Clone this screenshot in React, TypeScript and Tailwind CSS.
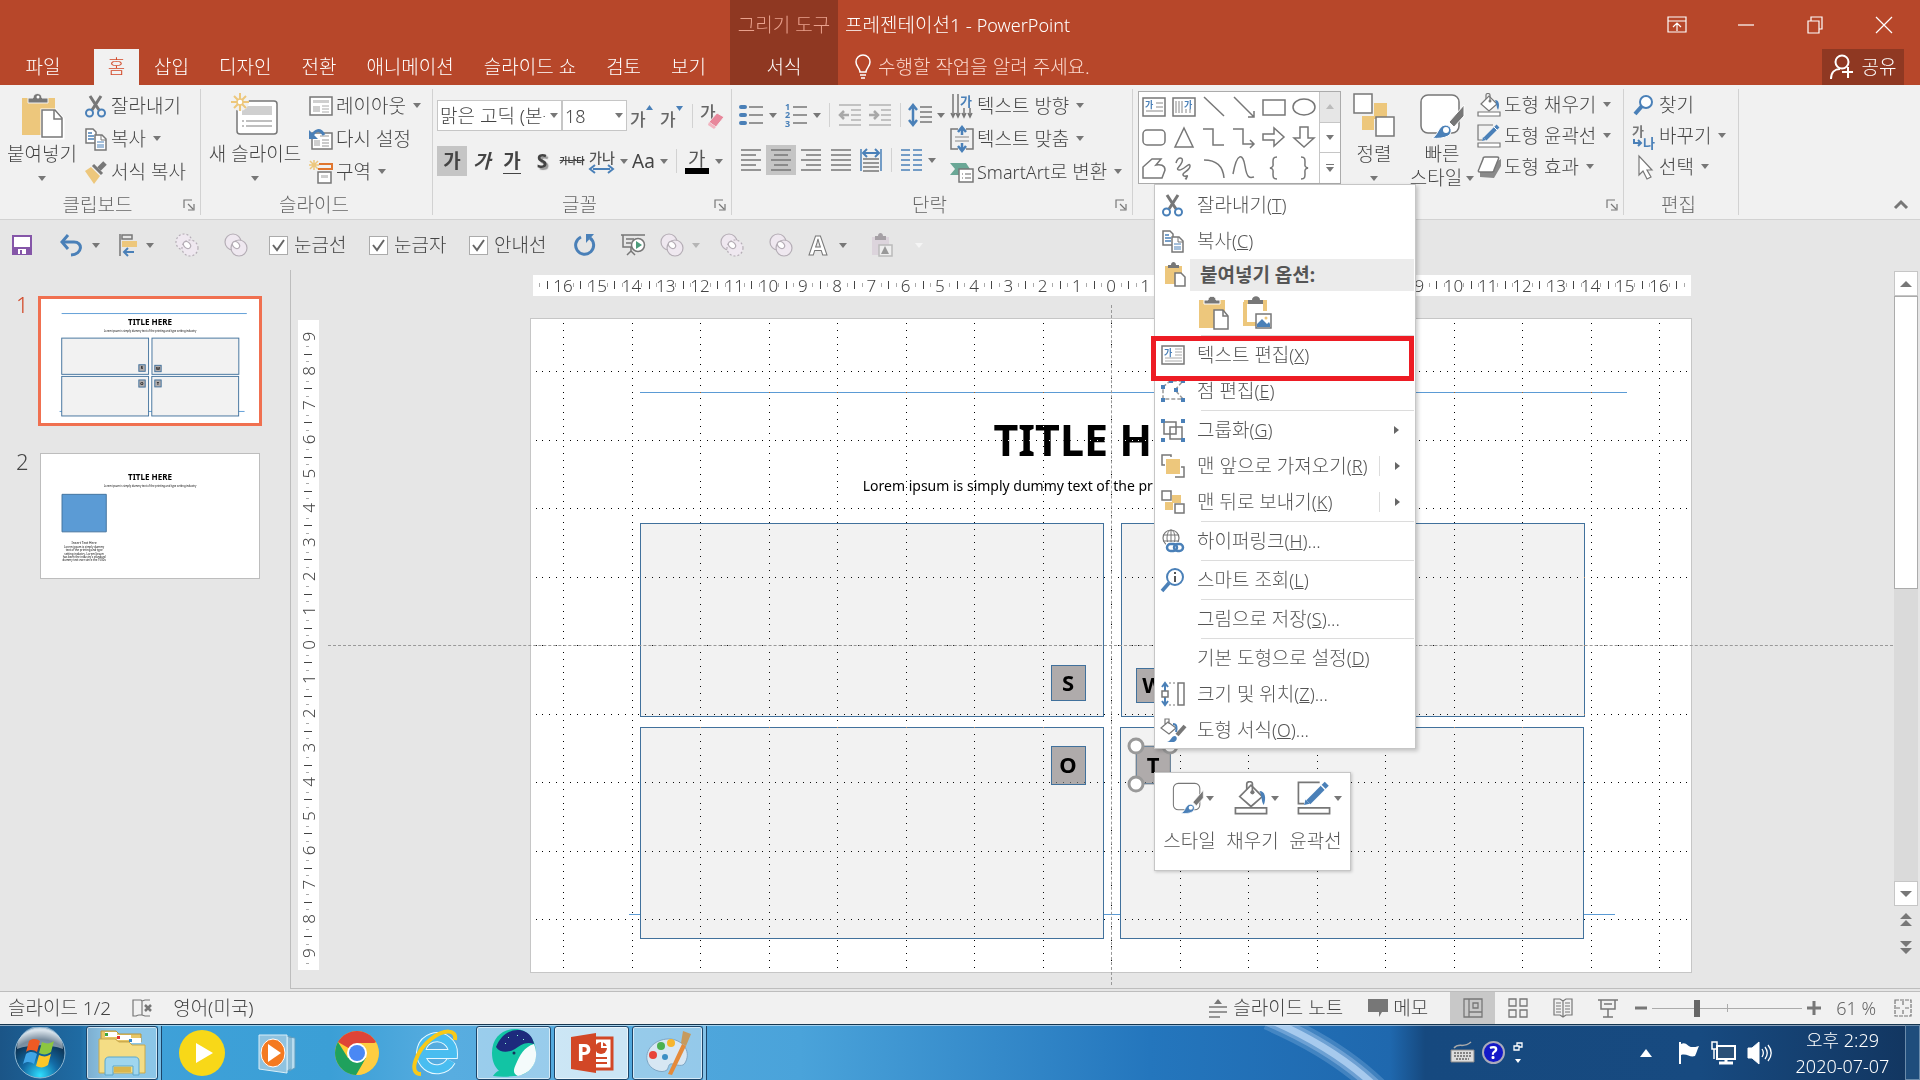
import React from 'react';

const BLUE = '#4a80b8';
const GRAY = '#777777';
const TAN = '#edc77c';

type IconProps = { w?: number; h?: number; children?: React.ReactNode };

const Icon = ({ w = 24, h = 24, children }: IconProps) => (
  <svg width={w} height={h} viewBox={`0 0 ${w} ${h}`} fill="none" stroke={GRAY} strokeWidth="1.5" className="shrink-0 overflow-visible" aria-hidden="true">
    {children}
  </svg>
);

const Caret = ({ className = 'text-[#777]' }: { className?: string }) => (
  <svg width="8" height="5" viewBox="0 0 8 5" fill="currentColor" className={`shrink-0 ${className}`} aria-hidden="true">
    <path d="M0 0h8L4 5z" />
  </svg>
);

/* Clipboard icons */

const PasteIcon = () => (
  <Icon w={44} h={46}>
    <path d="M2 5h33v37H2z" fill={TAN} stroke="none" />
    <path d="M8 10V5h5c0-6 9-6 9 0h6v5z" fill={GRAY} stroke="#f1f1f1" strokeWidth="1" />
    <circle cx="18" cy="4" r="1.5" fill="#fff" stroke="none" />
    <path d="M22 17h13l8 9v19H22z" fill="#fff" stroke="#fff" strokeWidth="3" />
    <path d="M22 17h13l7 8v19H22z" fill="#fff" />
    <path d="M34 17v9h8" />
  </Icon>
);

const PasteSmallIcon = () => (
  <Icon w={24} h={26}>
    <path d="M2 4h17v18H2z" fill={TAN} stroke="none" />
    <path d="M5 6V3h3c0-4 5-4 5 0h3v3z" fill={GRAY} stroke="none" />
    <path d="M12 11h6l4 4v9H12z" fill="#fff" />
  </Icon>
);

const PasteKeepIcon = () => (
  <Icon w={30} h={34}>
    <path d="M1 4h26v28H1z" fill={TAN} stroke="none" />
    <path d="M6 8V4h4c0-5 8-5 8 0h4v4z" fill={GRAY} stroke="#fff" strokeWidth="1" />
    <path d="M16 14h9l5 6v13H16z" fill="#fff" />
    <path d="M25 14v6h5" />
  </Icon>
);

const PastePictureIcon = () => (
  <Icon w={30} h={34}>
    <path d="M3 6v22h12M23 6v9" stroke={TAN} strokeWidth="4" />
    <path d="M2 4h6v4H2zM18 4h7v4h-7z" fill={TAN} stroke="none" />
    <path d="M6 8V4h4c0-5 8-5 8 0h3v4z" fill={GRAY} stroke="none" />
    <path d="M14 18h15v14H14z" fill="#fff" />
    <path d="M15 31v-3l5-5 5 5 2-2 1 2v3z" fill={BLUE} stroke="none" />
    <circle cx="24" cy="22" r="1.5" fill={TAN} stroke="none" />
  </Icon>
);

const CutIcon = () => (
  <Icon>
    <path d="M6 2l9 14M17 2L8 16" stroke={GRAY} strokeWidth="3" />
    <circle cx="5.500" cy="19" r="3.500" stroke={BLUE} strokeWidth="2" />
    <circle cx="17.500" cy="19" r="3.500" stroke={BLUE} strokeWidth="2" />
  </Icon>
);

const CopyIcon = () => (
  <Icon>
    <path d="M2 2h7l3 3v11H2z" fill="#fff" />
    <path d="M4 6h4M4 9h6M4 12h6" stroke={BLUE} />
    <path d="M11 8h7l4 4v11H11z" fill="#fff" />
    <path d="M17 8v5h5" strokeWidth="1" />
    <path d="M13 15h7M13 18h7M13 20h7" stroke={BLUE} strokeWidth="1" />
  </Icon>
);

const FormatPainterIcon = () => (
  <Icon>
    <path d="M1 11l6-4 9 9-6 8z" fill={TAN} stroke="none" />
    <path d="M9 5l9 9" strokeWidth="3" />
    <path d="M15 9l6-6" strokeWidth="5" />
  </Icon>
);

/* Slide icons */

const Spark = () => (
  <path d="M9 0v6M9 12v6M0 9h6M12 9h6M3 3l4 4M11 11l4 4M15 3l-4 4M7 11l-4 4" stroke={TAN} strokeWidth="2" />
);

const NewSlideIcon = () => (
  <Icon w={48} h={46}>
    <rect x="6" y="8" width="40" height="33" rx="3" fill="#fff" />
    <path d="M11 13h30v9H11z" fill="#cfcfcf" stroke="none" />
    <path d="M11 28h2M15 28h26M11 33h2M15 33h26" stroke="#aaa" />
    <circle cx="9" cy="9" r="9" fill="#f1f1f1" stroke="none" />
    <Spark />
    <circle cx="9" cy="9" r="3" fill="#fff" stroke={TAN} />
  </Icon>
);

const LayoutIcon = () => (
  <Icon>
    <path d="M1 3h22v18H1z" fill="#fff" />
    <path d="M4 6h16v3H4zM4 12h7v6H4z" fill="#cfcfcf" stroke="none" />
    <path d="M13 12h7M13 15h7M13 18h7" stroke="#aaa" strokeWidth="1" />
  </Icon>
);

const ResetIcon = () => (
  <Icon>
    <path d="M3 6h20v16H3z" fill="#fff" />
    <path d="M11 9h9M13 13h7M13 16h7M13 19h7" stroke="#bbb" />
    <path d="M5 13h6v6H5z" fill="#cfcfcf" stroke="none" />
    <path d="M3 9c3-6 8-8 12-1" stroke={BLUE} strokeWidth="3" />
    <path d="M0 3v9h9z" fill={BLUE} stroke="none" />
  </Icon>
);

const SectionIcon = () => (
  <Icon>
    <path d="M5 0v10M0 5h10M1 1l8 8M9 1L1 9" stroke={TAN} />
    <path d="M10 4h13v5H9" stroke="#e0762f" strokeWidth="2" />
    <path d="M9 12h13v11H9z" fill="#fff" />
    <path d="M12 15h7v3h-7z" fill="#cfcfcf" stroke="none" />
  </Icon>
);

/* Text glyph icons */

const GrowFontIcon = ({ up }: { up: boolean }) => (
  <Icon w={26} h={28}>
    <text x="1" y="24" fontSize="17" fontWeight="500" fill="#666" stroke="none">가</text>
    <path d={up ? 'M17 8h7l-3.500-5z' : 'M17 4h7l-3.500 5z'} fill={BLUE} stroke="none" />
  </Icon>
);

const ClearFormatIcon = () => (
  <Icon w={26} h={28}>
    <text x="0" y="17" fontSize="17" fontWeight="500" fill="#666" stroke="none">가</text>
    <path d="M9 20l8-9 7 4-8 10z" fill="#e8879b" stroke="#f1f1f1" strokeWidth="1" />
    <path d="M9 20l7 5-2 2-6-4z" fill="#f3b4c0" stroke="none" />
  </Icon>
);

const SpacingIcon = () => (
  <Icon w={26} h={26}>
    <text x="0" y="15" fontSize="14" fontWeight="500" fill="#555" stroke="none">가나</text>
    <path d="M4 21h17" stroke={BLUE} strokeWidth="2" />
    <path d="M6 17l-5 4 5 4M19 17l5 4-5 4" stroke={BLUE} strokeWidth="2" />
  </Icon>
);

const FontColorIcon = () => (
  <Icon w={26} h={30}>
    <text x="4" y="20" fontSize="19" fontWeight="400" fill="#555" stroke="none">가</text>
    <path d="M1 22h24v6H1z" fill="#000" stroke="none" />
  </Icon>
);

/* Paragraph icons */

const BulletsIcon = () => (
  <Icon>
    <path d="M9 4h14M9 12h14M9 20h14" />
    <path d="M1 4h4M1 12h4M1 20h4" stroke={BLUE} strokeWidth="4" strokeLinecap="round" />
  </Icon>
);

const NumberingIcon = () => (
  <Icon>
    <path d="M9 4h14M9 12h14M9 20h14" />
    <g fill={BLUE} stroke="none" fontSize="9" fontWeight="700">
      <text x="1" y="7">1</text>
      <text x="1" y="15">2</text>
      <text x="1" y="24">3</text>
    </g>
  </Icon>
);

const IndentIcon = ({ flip = false }: { flip?: boolean }) => (
  <Icon>
    <path d="M1 2h22M13 7h10M13 12h10M13 17h10M1 22h22" stroke="#b3b3b3" />
    <path d={flip ? 'M1 12h8M6 8l4 4-4 4' : 'M3 12h8M6 8l-4 4 4 4'} stroke="#a8a8a8" strokeWidth="2.500" />
  </Icon>
);

const LineSpacingIcon = () => (
  <Icon w={24} h={26}>
    <path d="M12 5h12M12 10h12M12 15h12M12 20h12" />
    <path d="M5 4v18M1 8l4-5 4 5M1 18l4 5 4-5" stroke={BLUE} strokeWidth="2.500" />
  </Icon>
);

const alignPaths = {
  left: 'M2 2h20M2 7h15M2 12h20M2 17h15M2 22h20',
  center: 'M2 2h20M5 7h14M2 12h20M5 17h14M2 22h20',
  right: 'M2 2h20M7 7h15M2 12h20M7 17h15M2 22h20',
  justify: 'M2 2h20M2 7h20M2 12h20M2 17h20M2 22h20',
};

const AlignIcon = ({ kind }: { kind: keyof typeof alignPaths }) => (
  <Icon>
    <path d={alignPaths[kind]} />
  </Icon>
);

const DistributeIcon = () => (
  <Icon>
    <path d="M2 1v22M22 1v22" stroke={BLUE} />
    <path d="M5 5h14M8 1L4 5l4 4M16 1l4 4-4 4" stroke={BLUE} strokeWidth="2" />
    <path d="M4 11h16M4 15h16M4 19h16M4 23h16" />
  </Icon>
);

const ColumnsIcon = () => (
  <Icon>
    <path d="M2 2h9M2 7h9M2 12h9M2 17h9M2 22h9M14 2h9M14 7h9M14 12h9M14 17h9M14 22h9" stroke={BLUE} />
  </Icon>
);

const TextDirectionIcon = () => (
  <Icon>
    <path d="M3 0v22M8 0v22M14 14v8M20 14v8M1 19l2 4 2-4M6 19l2 4 2-4M12 19l2 4 2-4M18 19l2 4 2-4" />
    <text x="10" y="12" fontSize="13" fontWeight="700" fill={BLUE} stroke="none">가</text>
  </Icon>
);

const TextAlignIcon = () => (
  <Icon w={24} h={26}>
    <path d="M8 3H1v20h7M16 3h7v20h-7" />
    <path d="M5 11h14M5 15h14" stroke="#aaa" />
    <path d="M12 2v7M8 6l4-5 4 5M12 17v7M8 20l4 5 4-5" stroke={BLUE} strokeWidth="2.500" />
  </Icon>
);

const SmartArtIcon = () => (
  <Icon>
    <path d="M0 3h16l4 6-4 6H0l5-6z" fill="#6aa796" stroke="none" />
    <path d="M9 9h14v13H9z" fill="#fff" />
    <path d="M12 14h1M15 14h6M12 18h1M15 18h6" stroke="#999" />
  </Icon>
);

/* Drawing icons */

const ArrangeIcon = () => (
  <Icon w={44} h={46}>
    <path d="M22 10h13v16H22zM10 23h12v14H10z" fill={TAN} stroke="none" />
    <path d="M2 1h18v19H2z" fill="#fff" />
    <path d="M24 24h18v19H24z" fill="#fff" />
  </Icon>
);

const QuickStyleIcon = ({ size = 46 }: { size?: number }) => (
  <svg width={size} height={size} viewBox="0 0 46 46" fill="none" stroke={GRAY} strokeWidth="1.5" aria-hidden="true">
    <rect x="2" y="2" width="38" height="38" rx="7" fill="#fff" />
    <path d="M45 12v11L35 34l-5-5z" fill={GRAY} stroke="#fff" strokeWidth="1" />
    <path d="M13 45c6-2 6-12 13-13 7 0 8 8 3 11-4 2-10 3-16 2z" fill={BLUE} stroke="#fff" strokeWidth="1" />
    <circle cx="27" cy="37" r="3" fill="#fff" stroke="none" />
  </svg>
);

const FillIcon = ({ w = 24, h = 24 }: { w?: number; h?: number }) => (
  <svg width={w} height={h} viewBox="0 0 24 24" fill="none" stroke={GRAY} strokeWidth="1.2" aria-hidden="true">
    <path d="M4 11l8-8 8 8-8 7z" fill="#fff" />
    <path d="M9 6V2c0-2 4-2 4 0v6" />
    <circle cx="13" cy="8" r="1.500" fill={GRAY} stroke="none" />
    <path d="M18 7c4 0 5 5 3 10-2-3-1-6-3-10z" fill={BLUE} stroke="none" />
    <path d="M1 19h22v4H1z" fill="#fff" />
  </svg>
);

const OutlineIcon = ({ w = 24, h = 24 }: { w?: number; h?: number }) => (
  <svg width={w} height={h} viewBox="0 0 24 24" fill="none" stroke={GRAY} strokeWidth="1.2" aria-hidden="true">
    <path d="M16 1H1v15h4" />
    <path d="M8 15L21 2" stroke={BLUE} strokeWidth="4" />
    <path d="M5 17l1-4 3 3z" fill={BLUE} stroke="none" />
    <path d="M17 3l4 4" stroke="#fff" strokeWidth="1" />
    <path d="M1 19h22v4H1z" fill="#fff" />
  </svg>
);

const EffectIcon = () => (
  <Icon>
    <path d="M3 16v6l14 1 7-12V4z" fill="#8a8a8a" stroke="none" />
    <path d="M8 2h12c2 0 2 1 1 3l-4 10c0 1-1 2-2 2H3c-2 0-2-1-1-3L6 4c0-1 1-2 2-2z" fill="#fff" />
  </Icon>
);

const FindIcon = () => (
  <Icon>
    <circle cx="14" cy="9" r="6" fill="#fff" stroke={BLUE} strokeWidth="2" />
    <path d="M10 13l-7 8" stroke={BLUE} strokeWidth="4" />
  </Icon>
);

const ReplaceIcon = () => (
  <Icon>
    <text x="0" y="12" fontSize="13" fontWeight="700" fill="#777" stroke="none">가</text>
    <text x="11" y="24" fontSize="13" fontWeight="700" fill={BLUE} stroke="none">나</text>
    <path d="M2 15v4h6M6 16l3 3-3 3" stroke={BLUE} strokeWidth="2" />
  </Icon>
);

const SelectIcon = () => (
  <Icon>
    <path d="M7 1v19l4-4 4 8 4-2-4-7h5z" fill="#fff" strokeWidth="1.2" />
  </Icon>
);

/* Context menu icons */

const TextEditIcon = () => (
  <Icon>
    <path d="M1 3h22v18H1z" fill="#fff" />
    <text x="3" y="13" fontSize="9" fontWeight="700" fill={BLUE} stroke="none">가</text>
    <path d="M14 6h7M14 9h7M14 12h7M4 15h17M4 18h17" stroke="#aaa" strokeWidth="1" />
  </Icon>
);

const PointEditIcon = () => (
  <Icon>
    <path d="M2 8l7-6h13l-8 9 8 9H2z" stroke="#999" strokeDasharray="4 2" />
    <path d="M0 6h4v4H0zM8 0h4v4H8zM20 0h4v4h-4zM13 9h4v4h-4zM0 19h4v4H0zM20 19h4v4h-4z" fill={BLUE} stroke="none" />
  </Icon>
);

const GroupIcon = () => (
  <Icon>
    <path d="M3 4h12v12H3zM9 9h12v12H9z" />
    <path d="M0 1h4v4H0zM20 1h4v4h-4zM0 20h4v4H0zM20 20h4v4h-4z" fill={BLUE} stroke="none" />
  </Icon>
);

const BringFrontIcon = () => (
  <Icon>
    <path d="M10 3V1H1v10h3M14 23h9V13h-3" />
    <path d="M5 5h14v15H5z" fill={TAN} stroke="none" />
  </Icon>
);

const SendBackIcon = () => (
  <Icon>
    <path d="M11 5h9v8h-9zM4 12h8v8H4z" fill={TAN} stroke="none" />
    <path d="M1 1h9v9H1zM14 14h9v9h-9z" fill="#fff" />
  </Icon>
);

const HyperlinkIcon = () => (
  <Icon>
    <circle cx="10" cy="9" r="8" strokeWidth="1.2" />
    <ellipse cx="10" cy="9" rx="4" ry="8" strokeWidth="1" />
    <path d="M2 6h16M2 12h16M10 1v16" strokeWidth="1" />
    <rect x="5" y="13" width="19" height="11" fill="#fff" stroke="none" />
    <rect x="6" y="15" width="10" height="7" rx="3.500" stroke={BLUE} strokeWidth="2.500" />
    <rect x="13" y="15" width="9" height="7" rx="3.500" stroke={BLUE} strokeWidth="2.500" />
  </Icon>
);

const SmartLookupIcon = () => (
  <Icon>
    <circle cx="14" cy="9" r="8" stroke={BLUE} strokeWidth="2" />
    <path d="M8 15l-7 8" stroke={BLUE} strokeWidth="3.500" />
    <path d="M14 8v6M14 4v2" stroke="#555" strokeWidth="2" />
  </Icon>
);

const SizeIcon = () => (
  <Icon>
    <path d="M4 2v20M1 5l3-4 3 4M1 19l3 4 3-4" stroke={BLUE} strokeWidth="2" />
    <path d="M1 9h6v6H1z" fill="#fff" />
    <path d="M17 1h6v22h-6z" fill="#fff" />
    <path d="M8 1h8M8 23h8" strokeDasharray="2 2" strokeWidth="1" />
  </Icon>
);

const FormatShapeIcon = () => (
  <Icon>
    <path d="M0 10l7-6 8 6-7 6zM4 6V1h4v5" strokeWidth="1.2" />
    <path d="M12 6c4 0 4 4 3 8" stroke={BLUE} strokeWidth="2" />
    <path d="M24 8l-8 9" strokeWidth="4" />
    <path d="M6 24c4-1 4-6 8-6 3 1 2 5-1 6z" fill={BLUE} stroke="none" />
  </Icon>
);

/* Shape gallery */

const shapeCells = [
  <><path d="M1 3h22v18H1z" fill="#fff" /><text x="3" y="13" fontSize="9" fontWeight="700" fill={BLUE} stroke="none">가</text><path d="M14 8h7M14 12h7M4 16h17" strokeWidth="1" stroke="#888" /></>,
  <><path d="M1 3h22v18H1z" fill="#fff" /><path d="M4 6v12M7 6v12M10 6v12M14 14v4M18 14v4" stroke="#888" strokeWidth="1" /><text x="12" y="13" fontSize="9" fontWeight="700" fill={BLUE} stroke="none">가</text></>,
  <path d="M2 2l20 19" />,
  <path d="M2 2l20 20M22 16v6h-6" />,
  <path d="M1 5h22v15H1z" />,
  <ellipse cx="12" cy="12" rx="11" ry="8" />,
  <rect x="1" y="5" width="22" height="15" rx="4" />,
  <path d="M12 3l9 19H3z" />,
  <path d="M1 4h10v16h11" />,
  <path d="M1 4h10v15h11M18 15l4 4-4 4" />,
  <path d="M1 9h11V3l10 9-10 9v-6H1z" />,
  <path d="M8 2h8v11h6L12 22 2 13h6z" />,
  <path d="M1 22V11l9-8h9l-5 6c4-1 9 0 9 5l-3 8z" />,
  <path d="M4 7c2-7 8-6 6-1S3 13 7 14s11-9 11-4-8 6-7 9 6-1 4 2-2 1 0 2" />,
  <path d="M2 4c13 0 19 6 20 18" />,
  <path d="M1 18C5-4 11-3 13 10s5 12 9 11" />,
  <path d="M15 1c-4 0-4 2-4 5s1 5-3 6c4 1 3 3 3 6s0 5 4 5" />,
  <path d="M9 1c4 0 4 2 4 5s-1 5 3 6c-4 1-3 3-3 6s0 5-4 5" />,
];

/* Ribbon parts */

const ToolButton = ({ label, className = 'w-[30px]', caret = false, children }: { label: string; className?: string; caret?: boolean; children: React.ReactNode }) => (
  <button type="button" aria-label={label} className={`flex h-[30px] shrink-0 items-center justify-center gap-[5px] ${className}`}>
    {children}
    {caret && <Caret />}
  </button>
);

const RowButton = ({ icon, label, caret = false, className = 'h-[33px]' }: { icon: React.ReactNode; label: string; caret?: boolean; className?: string }) => (
  <button type="button" className={`flex items-center gap-[3px] whitespace-nowrap ${className}`}>
    {icon}
    <span>{label}</span>
    {caret && <span className="pl-1"><Caret /></span>}
  </button>
);

const BigButton = ({ icon, lines, className, inline = false }: { icon: React.ReactNode; lines: string[]; className: string; inline?: boolean }) => (
  <button type="button" className={`flex shrink-0 flex-col items-center pt-1 whitespace-nowrap ${className}`}>
    {icon}
    <span className="pt-[3px]">{lines[0]}</span>
    {inline ? (
      <span className="flex items-center gap-1">{lines[1]}<Caret /></span>
    ) : (
      <span className="pt-[10px]"><Caret /></span>
    )}
  </button>
);

const Divider = () => <span className="mx-[5px] h-[24px] w-px shrink-0 bg-[#d2d2d2]" />;

const Group = ({ title, launcher = true, className, children }: { title: string; launcher?: boolean; className: string; children: React.ReactNode }) => (
  <section aria-label={title} className={`flex shrink-0 flex-col border-r border-[#d2d2d2] ${className}`}>
    <div className="flex h-[106px]">{children}</div>
    <div className="flex h-[20px] items-center text-[#666]">
      <span className="flex-1" />
      <h2>{title}</h2>
      <span className="flex flex-1 justify-end pr-[5px]">
        {launcher && (
          <button type="button" aria-label={`${title} 옵션`}>
            <Icon w={12} h={12}>
              <path d="M1 9V1h8M5 5l5 5M11 5v6H5" strokeWidth="1.2" />
            </Icon>
          </button>
        )}
      </span>
    </div>
  </section>
);

const tabs = ['삽입', '디자인', '전환', '애니메이션', '슬라이드 쇼', '검토', '보기'];

const TitleBar = () => (
  <header className="flex h-[85px] bg-[#b7472a] text-white">
    <nav className="flex w-[730px] shrink-0 items-end whitespace-nowrap">
      <button type="button" className="h-[36px] w-[94px] pr-2">파일</button>
      <button type="button" className="h-[36px] w-[45px] bg-[#f1f1f1] text-[#d24726]">홈</button>
      {tabs.map((tab) => (
        <button key={tab} type="button" className="h-[36px] px-[15px]">{tab}</button>
      ))}
    </nav>
    <div className="flex w-[108px] shrink-0 flex-col justify-between bg-[#8f3822] text-center">
      <span className="pt-[13px] text-[#e9a18d]">그리기 도구</span>
      <button type="button" className="h-[36px]">서식</button>
    </div>
    <div className="flex min-w-0 flex-1 flex-col justify-between">
      <div className="flex h-[49px] items-center justify-between pr-[25px] pl-[7px]">
        <h1>프레젠테이션1 - <span className="text-[18px]">PowerPoint</span></h1>
        <div className="flex gap-[47px]">
          <button type="button" aria-label="리본 메뉴 표시 옵션">
            <Icon w={22} h={18}><path d="M2 1h18v15H2zM2 5h18M11 15V8M7 11l4-4 4 4" stroke="#fff" strokeWidth="1.2" /></Icon>
          </button>
          <button type="button" aria-label="최소화">
            <Icon w={22} h={18}><path d="M3 9h16" stroke="#fff" strokeWidth="1.2" /></Icon>
          </button>
          <button type="button" aria-label="이전 크기로 복원">
            <Icon w={22} h={18}><path d="M4 5h11v12H4zM7 5V1h11v12h-3" stroke="#fff" strokeWidth="1.2" /></Icon>
          </button>
          <button type="button" aria-label="닫기">
            <Icon w={22} h={18}><path d="M3 1l16 16M19 1L3 17" stroke="#fff" strokeWidth="1.2" /></Icon>
          </button>
        </div>
      </div>
      <div className="flex items-center justify-between pr-4 pl-4">
        <button type="button" className="flex items-center gap-[6px] text-[#fbd9cf]">
          <Icon w={18} h={26}>
            <path d="M6 18c0-4-4-5-4-10a7 7 0 0 1 14 0c0 5-4 6-4 10zM6 21h6M7 24h4" stroke="#fff" />
          </Icon>
          수행할 작업을 알려 주세요.
        </button>
        <button type="button" className="flex h-[36px] w-[82px] items-center justify-center gap-2 bg-[#8f3822]">
          <Icon w={24} h={26}>
            <circle cx="12" cy="8" r="6.500" stroke="#fff" strokeWidth="2" />
            <path d="M1 25c0-7 4-10 9-10M18 13v11M12 18h11" stroke="#fff" strokeWidth="2" />
          </Icon>
          공유
        </button>
      </div>
    </div>
  </header>
);

const Ribbon = () => (
  <div className="flex h-[135px] border-b border-[#d2d2d2] bg-[#f1f1f1] py-1">
    <Group title="클립보드" className="w-[201px]">
      <BigButton icon={<PasteIcon />} lines={['붙여넣기']} className="w-[84px]" />
      <div className="flex flex-col">
        <RowButton icon={<CutIcon />} label="잘라내기" />
        <RowButton icon={<CopyIcon />} label="복사" caret />
        <RowButton icon={<FormatPainterIcon />} label="서식 복사" />
      </div>
    </Group>

    <Group title="슬라이드" launcher={false} className="w-[232px]">
      <BigButton icon={<NewSlideIcon />} lines={['새 슬라이드']} className="w-[108px]" />
      <div className="flex flex-col">
        <RowButton icon={<LayoutIcon />} label="레이아웃" caret />
        <RowButton icon={<ResetIcon />} label="다시 설정" />
        <RowButton icon={<SectionIcon />} label="구역" caret />
      </div>
    </Group>

    <Group title="글꼴" className="w-[299px]">
      <div className="flex flex-col gap-[15px] pt-[11px] pl-1">
        <div className="flex items-center">
          <span className="relative flex">
            <select aria-label="글꼴 이름" className="h-[31px] w-[125px] appearance-none border border-[#c6c6c6] bg-white pr-4 pl-[2px]">
              <option>맑은 고딕 (본문)</option>
            </select>
            <span className="pointer-events-none absolute inset-y-0 right-1 flex items-center"><Caret /></span>
          </span>
          <span className="relative flex">
            <select aria-label="글꼴 크기" className="h-[31px] w-[65px] appearance-none border border-[#c6c6c6] bg-white pl-[2px] text-[18px]">
              <option>18</option>
            </select>
            <span className="pointer-events-none absolute inset-y-0 right-1 flex items-center"><Caret /></span>
          </span>
          <ToolButton label="글꼴 크기 크게"><GrowFontIcon up /></ToolButton>
          <ToolButton label="글꼴 크기 작게"><GrowFontIcon up={false} /></ToolButton>
          <Divider />
          <ToolButton label="서식 지우기"><ClearFormatIcon /></ToolButton>
        </div>
        <div className="flex items-center">
          <ToolButton label="굵게" className="w-[30px] bg-[#c5c5c5]"><span className="font-bold">가</span></ToolButton>
          <ToolButton label="기울임꼴"><span className="font-bold italic">가</span></ToolButton>
          <ToolButton label="밑줄"><span className="border-b border-[#444] font-bold">가</span></ToolButton>
          <ToolButton label="텍스트 그림자"><span className="font-bold [text-shadow:2px_2px_1px_#999]">S</span></ToolButton>
          <ToolButton label="취소선"><span className="text-[9px] font-bold line-through">가나다</span></ToolButton>
          <ToolButton label="문자 간격" className="w-[42px]" caret><SpacingIcon /></ToolButton>
          <ToolButton label="대/소문자 바꾸기" className="w-[42px]" caret><span className="font-normal">Aa</span></ToolButton>
          <Divider />
          <ToolButton label="글꼴 색" className="w-[42px]" caret><FontColorIcon /></ToolButton>
        </div>
      </div>
    </Group>

    <Group title="단락" className="w-[401px]">
      <div className="flex w-[216px] flex-col gap-[15px] pt-[11px] pl-1">
        <div className="flex items-center">
          <ToolButton label="글머리 기호" className="w-[44px]" caret><BulletsIcon /></ToolButton>
          <ToolButton label="번호 매기기" className="w-[44px]" caret><NumberingIcon /></ToolButton>
          <Divider />
          <ToolButton label="목록 수준 줄임"><IndentIcon /></ToolButton>
          <ToolButton label="목록 수준 늘림"><IndentIcon flip /></ToolButton>
          <Divider />
          <ToolButton label="줄 간격" className="w-[40px]" caret><LineSpacingIcon /></ToolButton>
        </div>
        <div className="flex items-center">
          <ToolButton label="왼쪽 맞춤"><AlignIcon kind="left" /></ToolButton>
          <ToolButton label="가운데 맞춤" className="w-[30px] bg-[#c5c5c5]"><AlignIcon kind="center" /></ToolButton>
          <ToolButton label="오른쪽 맞춤"><AlignIcon kind="right" /></ToolButton>
          <ToolButton label="양쪽 맞춤"><AlignIcon kind="justify" /></ToolButton>
          <ToolButton label="균등 분할"><DistributeIcon /></ToolButton>
          <Divider />
          <ToolButton label="단 추가 또는 제거" className="w-[40px]" caret><ColumnsIcon /></ToolButton>
        </div>
      </div>
      <div className="flex flex-col pl-[2px]">
        <RowButton icon={<TextDirectionIcon />} label="텍스트 방향" caret />
        <RowButton icon={<TextAlignIcon />} label="텍스트 맞춤" caret />
        <button type="button" className="flex h-[33px] items-center gap-[3px] whitespace-nowrap">
          <SmartArtIcon />
          <span><span className="text-[18px]">SmartArt</span>로 변환</span>
          <span className="pl-1"><Caret /></span>
        </button>
      </div>
    </Group>

    <Group title="그리기" className="w-[491px]">
      <div className="mt-[2px] ml-[5px] flex h-[93px] shrink-0 border border-[#ababab] bg-white">
        <div className="grid grid-cols-6">
          {shapeCells.map((shape, i) => (
            <button key={i} type="button" aria-label={`도형 ${i + 1}`} className="flex w-[30px] items-center justify-center">
              <Icon>{shape}</Icon>
            </button>
          ))}
        </div>
        <div className="flex w-[21px] flex-col divide-y divide-[#c6c6c6] border-l border-[#c6c6c6]">
          <button type="button" aria-label="위로" className="flex flex-1 items-center justify-center bg-[#e6e6e6]">
            <Icon w={8} h={5}><path d="M0 5h8L4 0z" fill="#bbb" stroke="none" /></Icon>
          </button>
          <button type="button" aria-label="아래로" className="flex flex-1 items-center justify-center"><Caret /></button>
          <button type="button" aria-label="자세히" className="flex flex-1 flex-col items-center justify-center gap-[2px]">
            <span className="h-px w-2 bg-[#777]" />
            <Caret />
          </button>
        </div>
      </div>
      <BigButton icon={<ArrangeIcon />} lines={['정렬']} className="w-[66px]" />
      <BigButton icon={<QuickStyleIcon />} lines={['빠른', '스타일']} inline className="w-[70px]" />
      <div className="flex flex-col">
        <RowButton icon={<FillIcon />} label="도형 채우기" caret className="h-[31px]" />
        <RowButton icon={<OutlineIcon />} label="도형 윤곽선" caret className="h-[31px]" />
        <RowButton icon={<EffectIcon />} label="도형 효과" caret className="h-[31px]" />
      </div>
    </Group>

    <Group title="편집" launcher={false} className="w-[115px]">
      <div className="flex flex-col pl-2">
        <RowButton icon={<FindIcon />} label="찾기" className="h-[31px]" />
        <RowButton icon={<ReplaceIcon />} label="바꾸기" caret className="h-[31px]" />
        <RowButton icon={<SelectIcon />} label="선택" caret className="h-[31px]" />
      </div>
    </Group>

    <div className="flex flex-1 items-end justify-end pr-3 pb-1">
      <button type="button" aria-label="리본 메뉴 축소">
        <Icon w={14} h={12}><path d="M1 9l6-6 6 6" strokeWidth="3" /></Icon>
      </button>
    </div>
  </div>
);

const Rings = ({ left, right }: { left?: boolean; right?: boolean }) => (
  <Icon w={24} h={24}>
    <g stroke="#b5aeb6" strokeWidth="1.2" fill="#efe8f0">
      <ellipse cx="9" cy="9" rx="8" ry="8" strokeDasharray={left ? '2 2' : undefined} />
      <ellipse cx="15" cy="15" rx="8" ry="8" strokeDasharray={right ? '2 2' : undefined} />
      <ellipse cx="12" cy="12" rx="3" ry="4" fill="#fff" transform="rotate(-45 12 12)" />
    </g>
  </Icon>
);

const QuickAccess = () => (
  <div className="flex h-[50px] items-center bg-[#e6e6e6] pl-3 whitespace-nowrap">
    <button type="button" aria-label="저장" className="w-[47px]">
      <Icon w={20} h={22}>
        <path d="M1 2h18v18H1z" fill="#fff" stroke="#8556a8" strokeWidth="2" />
        <path d="M1 13h18v7H1z" fill="#8556a8" stroke="none" />
        <path d="M6 15h8v5H6z" fill="#fff" stroke="none" />
        <path d="M8 16h2v4H8z" fill="#8556a8" stroke="none" />
      </Icon>
    </button>
    <button type="button" aria-label="실행 취소" className="flex w-[59px] items-center gap-[9px]">
      <Icon>
        <path d="M4 9h11c9 0 9 12-3 13" stroke={BLUE} strokeWidth="3" />
        <path d="M9 2L3 9l6 7" stroke={BLUE} strokeWidth="3" />
      </Icon>
      <Caret />
    </button>
    <button type="button" aria-label="맞춤" className="flex w-[57px] items-center gap-1">
      <Icon>
        <path d="M2 1v22M4 2h10v4H4z" />
        <path d="M4 8h15v6H4z" fill={TAN} stroke="none" />
        <path d="M16 19H7M10 15l-4 4 4 4" stroke={BLUE} strokeWidth="2" />
      </Icon>
      <Caret />
    </button>
    <button type="button" aria-label="도형 교차" className="w-[49px]"><Rings left right /></button>
    <button type="button" aria-label="도형 조각" className="w-[45px]"><Rings /></button>
    {['눈금선', '눈금자', '안내선'].map((label) => (
      <label key={label} className="flex w-[100px] items-center gap-[6px]">
        <span className="relative flex">
          <input type="checkbox" defaultChecked className="peer h-[19px] w-[19px] appearance-none border border-[#ababab] bg-white" />
          <svg width="19" height="19" viewBox="0 0 19 19" className="pointer-events-none absolute inset-0 hidden peer-checked:block" aria-hidden="true">
            <path d="M4 9l4 5 7-10" fill="none" stroke="#666" strokeWidth="2" />
          </svg>
        </span>
        {label}
      </label>
    ))}
    <button type="button" aria-label="다시 실행" className="ml-1 w-[48px]">
      <Icon>
        <path d="M8 4a9 9 0 1 0 9 1" stroke={BLUE} strokeWidth="3" />
        <path d="M13 1h8l-8 9z" fill={BLUE} stroke="none" />
      </Icon>
    </button>
    <button type="button" aria-label="처음부터 시작" className="w-[39px]">
      <Icon>
        <path d="M0 2h24M2 2v12h11M5 6h8M5 10h5M10 14v5M6 22l4-4 4 4" />
        <circle cx="17" cy="12" r="6.500" fill="#fff" />
        <path d="M15 8l6 4-6 4z" fill="#4d9c7c" stroke="none" />
      </Icon>
    </button>
    <button type="button" aria-label="도형 병합" className="flex w-[60px] items-center gap-2"><Rings /><Caret className="text-[#b5b5b5]" /></button>
    <button type="button" aria-label="도형 빼기" className="w-[49px]"><Rings right /></button>
    <button type="button" aria-label="도형 통합" className="w-[40px]"><Rings /></button>
    <button type="button" aria-label="텍스트 효과" className="flex w-[61px] items-center gap-3">
      <span className="text-[26px] font-bold text-white [-webkit-text-stroke:1px_#777]">A</span>
      <Caret />
    </button>
    <button type="button" aria-label="그림으로 붙여넣기" className="w-[45px]">
      <Icon>
        <path d="M2 4h17v18H2z" fill="#dcd4dc" stroke="none" />
        <path d="M5 7V3h3c0-4 5-4 5 0h3v4z" fill="#a5a0a5" stroke="none" />
        <path d="M9 12h13v11H9z" fill="#eee" stroke="#bbb" />
        <path d="M11 21l4-8 4 8z" fill="#999" stroke="none" />
      </Icon>
    </button>
    <Caret className="text-[#f5f5f5]" />
  </div>
);

/* Slide contents, in the slide's own pixels */

const SLIDE_W = 1162;
const SLIDE_H = 655;
const UNIT = 34.25;
const boxes = [
  [110, 205, 463, 193],
  [591, 205, 463, 193],
  [110, 409, 463, 211],
  [590, 409, 463, 211],
];
const badges: [string, number, number, number][] = [
  ['S', 521, 347, 35],
  ['W', 606, 350, 34],
  ['O', 521, 428, 38],
  ['T', 606, 428, 37],
];

const Heading = () => (
  <g textAnchor="middle">
    <text x="581" y="138" fontSize="43" fontWeight="700">TITLE HERE</text>
    <text x="581" y="173" fontSize="14" fontWeight="400">Lorem ipsum is simply dummy text of the printing and type setting industry</text>
  </g>
);

const SwotSlide = ({ line = 1 }: { line?: number }) => (
  <g strokeWidth={line}>
    <path d="M110 74.500H1097M99 596.500h986" stroke="#5b9bd5" fill="none" />
    <Heading />
    {boxes.map(([x, y, w, h]) => (
      <rect key={`${x}-${y}`} x={x + 0.5} y={y + 0.5} width={w} height={h} fill="#f2f2f2" stroke="#41719c" />
    ))}
    {badges.map(([letter, x, y, h]) => (
      <g key={letter}>
        <rect x={x + 0.5} y={y + 0.5} width="34" height={h} fill="#afabab" stroke="#41719c" />
        <text x={x + 17} y={y + h / 2 + 8} fontSize="22" fontWeight="700" textAnchor="middle">{letter}</text>
      </g>
    ))}
  </g>
);

const bodyLines = [
  'Lorem ipsum is simply dummy',
  'text of the printing and type',
  'setting industry. Lorem Ipsum',
  'has been the industry’s standard',
  'dummy text ever since the 1500s',
];

const Thumbnails = () => (
  <aside className="w-[291px] shrink-0 border-r border-[#bdbdbd] pt-[26px]">
    <ol className="flex flex-col gap-[27px] text-[22px] leading-[16px]">
      <li className="flex gap-[11px] pl-4">
        <span className="w-[11px] text-[#d24726]">1</span>
        <button type="button" aria-label="슬라이드 1" className="border-3 border-[#f07050] bg-white">
          <svg width="218" height="124" viewBox={`0 0 ${SLIDE_W} ${SLIDE_H}`}><SwotSlide line={5} /></svg>
        </button>
      </li>
      <li className="flex gap-[13px] pl-4">
        <span className="w-[11px]">2</span>
        <button type="button" aria-label="슬라이드 2" className="border border-[#bdbdbd] bg-white">
          <svg width="218" height="124" viewBox={`0 0 ${SLIDE_W} ${SLIDE_H}`}>
            <Heading />
            <path d="M112 212h236v200H112z" fill="#5b9bd5" stroke="#41719c" strokeWidth="5" />
            <g textAnchor="middle" fontSize="15" fontWeight="400">
              <text x="230" y="478" fontSize="18">Insert Text Here</text>
              {bodyLines.map((text, i) => (
                <text key={text} x="230" y={497 + i * 18}>{text}</text>
              ))}
            </g>
          </svg>
        </button>
      </li>
    </ol>
  </aside>
);

const marks = (max: number) => Array.from({ length: max * 2 + 1 }, (_, i) => i - max);

const HorizontalRuler = () => (
  <svg width="1158" height="21" viewBox="0 0 1158 21" className="ml-[3px] block bg-white" aria-hidden="true">
    {marks(16).map((n) => {
      const x = 578 + n * UNIT;
      return (
        <g key={n}>
          <text x={x} y="17" fontSize="17" textAnchor="middle" fill="#444">{Math.abs(n)}</text>
          <path d={`M${Math.round(x + UNIT / 2) + 0.5} 6v8`} stroke="#444" />
          <path d={`M${Math.round(x + UNIT / 4 + 1) + 0.5} 8v4M${Math.round(x + UNIT * 0.75 - 1) + 0.5} 8v4`} stroke="#aaa" />
        </g>
      );
    })}
    <path d="M14.500 6v8" stroke="#444" />
    <path d="M6.500 8v4" stroke="#aaa" />
  </svg>
);

const VerticalRuler = () => (
  <svg width="21" height="650" viewBox="0 0 21 650" className="mt-[50px] ml-[7px] shrink-0 bg-white" aria-hidden="true">
    {marks(9).map((n) => {
      const y = 325 + n * UNIT;
      return (
        <g key={n}>
          <text x="17" y={y} fontSize="17" textAnchor="middle" fill="#444" transform={`rotate(-90 17 ${y})`}>{Math.abs(n)}</text>
          <path d={`M6 ${Math.round(y + UNIT / 2) + 0.5}h8`} stroke="#444" />
          <path d={`M8 ${Math.round(y + UNIT / 4 + 1) + 0.5}h3M8 ${Math.round(y + UNIT * 0.75 - 1) + 0.5}h3`} stroke="#aaa" />
        </g>
      );
    })}
  </svg>
);

const gridDots = () => {
  const step = UNIT / 5;
  const dots: string[] = [];
  const dot = (x: number, y: number) => dots.push(`M${Math.round(x)} ${Math.round(y)}h1v1h-1z`);
  for (let c = -8; c <= 8; c++) {
    for (let k = -47; k <= 47; k++) dot(581 + c * UNIT * 2, 327 + k * step);
  }
  for (let r = -4; r <= 4; r++) {
    for (let k = -84; k <= 84; k++) {
      if (k % 10 !== 0) dot(581 + k * step, 327 + r * UNIT * 2);
    }
  }
  return dots.join('');
};

const Slide = () => (
  <div className="relative mt-[22px] border border-[#c6c6c6] bg-white">
    <svg width="1160" height="653" viewBox="1 1 1160 653" className="block">
      <SwotSlide />
    </svg>
    <svg width="1160" height="653" viewBox="1 1 1160 653" className="absolute inset-0 mix-blend-difference" aria-hidden="true">
      <path d={gridDots()} fill="#fff" />
    </svg>
    <svg width="60" height="60" viewBox="595 415 60 60" className="absolute top-[414px] left-[594px]" aria-hidden="true">
      <path d="M606 428h34v38h-34z" fill="none" stroke="#999" />
      {[[606, 428], [640, 428], [606, 466], [640, 466]].map(([x, y]) => (
        <circle key={`${x}-${y}`} cx={x} cy={y} r="7" fill="#fff" stroke="#999" strokeWidth="3" />
      ))}
    </svg>
  </div>
);

const menuItems: { icon?: React.ReactNode; label: string; mnemonic: string; more?: boolean; sub?: 'plain' | 'split'; rule?: boolean }[] = [
  { icon: <TextEditIcon />, label: '텍스트 편집', mnemonic: 'X' },
  { icon: <PointEditIcon />, label: '점 편집', mnemonic: 'E', rule: true },
  { icon: <GroupIcon />, label: '그룹화', mnemonic: 'G', sub: 'plain' },
  { icon: <BringFrontIcon />, label: '맨 앞으로 가져오기', mnemonic: 'R', sub: 'split' },
  { icon: <SendBackIcon />, label: '맨 뒤로 보내기', mnemonic: 'K', sub: 'split', rule: true },
  { icon: <HyperlinkIcon />, label: '하이퍼링크', mnemonic: 'H', more: true, rule: true },
  { icon: <SmartLookupIcon />, label: '스마트 조회', mnemonic: 'L', rule: true },
  { label: '그림으로 저장', mnemonic: 'S', more: true, rule: true },
  { label: '기본 도형으로 설정', mnemonic: 'D' },
  { icon: <SizeIcon />, label: '크기 및 위치', mnemonic: 'Z', more: true },
  { icon: <FormatShapeIcon />, label: '도형 서식', mnemonic: 'O', more: true },
];

const MenuRow = ({ icon, label, mnemonic, more, sub, rule }: (typeof menuItems)[number]) => (
  <>
    <button type="button" className="flex h-[36px] w-full items-center whitespace-nowrap">
      <span className="flex w-[42px] pl-[6px]">{icon}</span>
      <span>
        {label}
        <span className="text-[18px]">(<u>{mnemonic}</u>){more && '...'}</span>
      </span>
      {sub && (
        <span className={`ml-auto flex h-[20px] w-[36px] items-center pl-[15px] ${sub === 'split' ? 'border-l border-[#dcdcdc]' : ''}`}>
          <Icon w={5} h={8}><path d="M0 0v8l5-4z" fill="#666" stroke="none" /></Icon>
        </span>
      )}
    </button>
    {rule && <div className="my-px mr-px ml-[46px] h-px bg-[#dcdcdc]" />}
  </>
);

const ContextMenu = () => (
  <div className="absolute top-[184px] left-[1154px] w-[262px] border border-[#c6c6c6] bg-white pt-[2px] text-[#555] shadow-[2px_2px_4px_rgba(0,0,0,0.2)]">
    <MenuRow icon={<CutIcon />} label="잘라내기" mnemonic="T" />
    <MenuRow icon={<CopyIcon />} label="복사" mnemonic="C" />
    <div className="flex h-[32px] items-center">
      <span className="w-[35px] pl-2"><PasteSmallIcon /></span>
      <h3 className="mr-px flex h-full flex-1 items-center bg-[#ebebeb] pl-[10px] font-bold">붙여넣기 옵션:</h3>
    </div>
    <div className="flex h-[43px] items-center gap-[14px] pl-[43px]">
      <button type="button" aria-label="대상 테마 사용"><PasteKeepIcon /></button>
      <button type="button" aria-label="그림"><PastePictureIcon /></button>
    </div>
    <div className="my-px mr-px ml-[46px] h-px bg-[#dcdcdc]" />
    {menuItems.map((item) => (
      <MenuRow key={item.label} {...item} />
    ))}
    <div className="pointer-events-none absolute top-[151px] -left-1 h-[45px] w-[263px] border-5 border-[#ed1c24]" />
  </div>
);

const miniTools = [
  { label: '스타일', icon: <QuickStyleIcon size={32} /> },
  { label: '채우기', icon: <FillIcon w={36} h={34} /> },
  { label: '윤곽선', icon: <OutlineIcon w={36} h={34} /> },
];

const MiniToolbar = () => (
  <div className="absolute top-[772px] left-[1154px] flex h-[99px] w-[197px] border border-[#c6c6c6] bg-white px-[3px] pt-2 text-[#555] shadow-[1px_1px_3px_rgba(0,0,0,0.2)]">
    {miniTools.map(({ label, icon }) => (
      <button key={label} type="button" className="flex flex-1 flex-col items-center gap-[14px]">
        <span className="flex h-[34px] items-center gap-[2px] pl-[6px]">{icon}<Caret /></span>
        <span>{label}</span>
      </button>
    ))}
  </div>
);

const ScrollBar = () => (
  <div className="flex w-[26px] shrink-0 flex-col pt-px pr-[2px]">
    <button type="button" aria-label="위로 스크롤" className="flex h-[25px] items-center justify-center border border-[#c6c6c6] bg-white">
      <Icon w={12} h={6}><path d="M0 6h12L6 0z" fill={GRAY} stroke="none" /></Icon>
    </button>
    <div className="flex-1 bg-[#dadada]">
      <div className="h-[293px] border border-[#ababab] bg-white" />
    </div>
    <button type="button" aria-label="아래로 스크롤" className="flex h-[25px] items-center justify-center border border-[#c6c6c6] bg-white">
      <Icon w={12} h={6}><path d="M0 0h12L6 6z" fill={GRAY} stroke="none" /></Icon>
    </button>
    <button type="button" aria-label="이전 슬라이드" className="flex h-[27px] items-center justify-center">
      <Icon w={12} h={14}><path d="M0 6h12L6 0zM0 13h12L6 7z" fill={GRAY} stroke="none" /></Icon>
    </button>
    <button type="button" aria-label="다음 슬라이드" className="mb-7 flex h-[27px] items-center justify-center">
      <Icon w={12} h={14}><path d="M0 1h12L6 7zM0 8h12l-6 6z" fill={GRAY} stroke="none" /></Icon>
    </button>
  </div>
);

const Editor = () => (
  <main className="flex min-h-[719px] flex-1 bg-[#e6e6e6]">
    <Thumbnails />
    <div className="relative flex min-w-0 flex-1 border-b border-[#bdbdbd]">
      <VerticalRuler />
      <div className="flex flex-1 justify-center pt-[5px] pl-2">
        <div className="relative">
          <HorizontalRuler />
          <Slide />
          <div className="absolute top-[30px] left-[581px] h-[680px] border-l border-dashed border-[#999]" />
        </div>
      </div>
      <div className="absolute top-[375px] right-[27px] left-[37px] border-t border-dashed border-[#999]" />
      <ScrollBar />
    </div>
  </main>
);

const StatusBar = () => (
  <footer className="mt-[2px] flex h-[33px] shrink-0 items-center justify-between border-t border-[#bdbdbd] bg-[#f1f1f1] whitespace-nowrap">
    <div className="flex items-center gap-5 pl-2">
      <span>슬라이드 1/2</span>
      <button type="button" aria-label="맞춤법 검사">
        <Icon w={22} h={22}>
          <path d="M11 4v14H8c-1 0-3 1-3 1H2V3h8zM11 4l3-1h5M11 18l3 1h5" strokeWidth="1.2" />
          <path d="M14 8l6 6M20 8l-6 6" strokeWidth="2.500" />
        </Icon>
      </button>
      <button type="button">영어(미국)</button>
    </div>
    <div className="flex h-full items-center">
      <button type="button" className="flex items-center gap-[5px]">
        <Icon w={20} h={20}><path d="M1 9h18M1 14h18M1 19h11" /><path d="M6 6h8l-4-5z" fill={GRAY} stroke="none" /></Icon>
        슬라이드 노트
      </button>
      <button type="button" className="ml-[25px] flex items-center gap-[5px]">
        <Icon w={20} h={20}><path d="M0 1h20v13h-6l-3 5v-5H0z" fill={GRAY} stroke="none" /></Icon>
        메모
      </button>
      <button type="button" aria-label="기본" className="ml-[22px] flex h-full w-[45px] items-center justify-center bg-[#c8c8c8]">
        <Icon w={20} h={20}><path d="M1 1h18v18H1zM6 1v18M6 14h13M10 5h5v5h-5z" strokeWidth="1.3" /></Icon>
      </button>
      <button type="button" aria-label="여러 슬라이드" className="flex w-[45px] justify-center">
        <Icon w={20} h={20}><path d="M1 1h7v7H1zM12 1h7v7h-7zM1 12h7v7H1zM12 12h7v7h-7z" strokeWidth="1.3" /></Icon>
      </button>
      <button type="button" aria-label="읽기용 보기" className="flex w-[45px] justify-center">
        <Icon w={20} h={20}><path d="M10 3L7 1H1v16h6l3 2 3-2h6V1h-6zM10 3v16M3 5h5M3 8h5M3 11h5M3 14h5M12 5h5M12 8h5M12 11h5M12 14h5" strokeWidth="1.2" /></Icon>
      </button>
      <button type="button" aria-label="슬라이드 쇼" className="flex w-[45px] justify-center">
        <Icon w={20} h={20}><path d="M0 2h20M3 2v9h14V2M6 6h8M10 11v8M5 19h10" /></Icon>
      </button>
      <button type="button" aria-label="축소" className="ml-[3px] flex w-4 justify-center">
        <Icon w={12} h={14}><path d="M0 7h12" strokeWidth="3" /></Icon>
      </button>
      <span className="relative mx-[3px] flex w-[150px] items-center">
        <span className="absolute left-[75px] h-[8px] w-px bg-[#ababab]" />
        <input
          type="range"
          aria-label="확대/축소"
          min="0"
          max="100"
          defaultValue="29"
          className="relative h-[18px] w-full appearance-none bg-transparent [&::-webkit-slider-runnable-track]:h-px [&::-webkit-slider-runnable-track]:bg-[#ababab] [&::-webkit-slider-thumb]:mt-[-8px] [&::-webkit-slider-thumb]:h-[17px] [&::-webkit-slider-thumb]:w-[6px] [&::-webkit-slider-thumb]:appearance-none [&::-webkit-slider-thumb]:bg-[#666]"
        />
      </span>
      <button type="button" aria-label="확대" className="flex w-[18px] justify-center">
        <Icon w={14} h={14}><path d="M0 7h14M7 0v14" strokeWidth="3" /></Icon>
      </button>
      <button type="button" className="ml-[13px] text-[18px] text-[#666]">61 %</button>
      <button type="button" aria-label="창에 맞춤" className="mr-2 ml-[18px]">
        <Icon w={18} h={18}><path d="M1 1h16v16H1zM9 2v5M9 11v5M2 9h5M11 9h5" strokeWidth="1.2" strokeDasharray="4 1" /></Icon>
      </button>
    </div>
  </footer>
);

const taskButton = 'flex h-[54px] items-center justify-center rounded-[3px] border border-[#1c4468] shadow-[inset_0_0_0_1px_rgba(255,255,255,0.6)]';

const Taskbar = () => (
  <div className="relative flex h-[56px] shrink-0 items-center overflow-hidden border-t border-[#16364f] bg-[linear-gradient(90deg,#1b5587_0px,#1f6ba3_80px,#3fa1d9_110px,#3b9fd6_330px,#58ade0_450px,#4aa3da_800px,#2476bd_1150px,#1f68ae_1390px,#16497f_1425px,#174a80_1700px,#12355f_1920px)] text-white shadow-[inset_0_1px_0_rgba(255,255,255,0.5)]">
    <svg width="260" height="56" viewBox="0 0 260 56" fill="none" stroke="#cfe6ff" className="absolute top-0 left-[1200px]" aria-hidden="true">
      <path d="M68 -6C110 12 150 36 180 66" strokeWidth="22" opacity="0.2" />
      <path d="M68 -6C110 12 150 36 180 66" strokeWidth="14" opacity="0.3" />
      <path d="M68 -6C110 12 150 36 180 66" strokeWidth="7" opacity="0.6" />
    </svg>
    <button type="button" aria-label="시작" className="ml-[14px] shrink-0">
      <svg width="52" height="52" viewBox="0 0 52 52">
        <defs>
          <radialGradient id="orb" cx="0.5" cy="0.95" r="0.9">
            <stop offset="0" stopColor="#2fe0ff" />
            <stop offset="0.4" stopColor="#136ba6" />
            <stop offset="0.8" stopColor="#0c3050" />
            <stop offset="1" stopColor="#b9cbd9" />
          </radialGradient>
        </defs>
        <circle cx="26" cy="26" r="25" fill="url(#orb)" stroke="#8fb6d0" />
        <path d="M3 22a23 23 0 0 1 46 0c-14-5-32-5-46 0z" fill="#fff" opacity="0.45" />
        <path d="M15 14c4-3 8-2 11 0l-3 11c-3-2-7-3-11 0z" fill="#ee5a24" />
        <path d="M28 15c4 2 8 2 12-1l-3 11c-4 3-8 3-12 1z" fill="#8cc63f" />
        <path d="M12 27c4-3 8-2 11 0l-3 10c-3-2-7-3-11 0z" fill="#41a6e8" />
        <path d="M25 28c4 2 8 2 12-1l-3 11c-4 3-8 3-12 1z" fill="#fcc729" />
      </svg>
    </button>
    <button type="button" aria-label="파일 탐색기" className={`ml-5 w-[72px] shrink-0 bg-white/40 ${taskButton}`}>
      <svg width="50" height="46" viewBox="0 0 50 46">
        <path d="M4 1h15l3 3h22v8H4z" fill="#e7c766" stroke="#b9963c" />
        <path d="M8 2h12v5H8zM20 5h14v5H20zM32 8h12v5H32z" fill="#fff" />
        <path d="M8 3h3v3H8z" fill="#3aa63a" /><path d="M20 6h3v3h-3z" fill="#d33" /><path d="M32 9h3v3h-3z" fill="#38c" />
        <path d="M2 9h16l4 3h10l3 3h13v28H2z" fill="#f4dd85" stroke="#caa94b" />
        <path d="M8 45V31c0-3 2-4 4-4h26c2 0 4 1 4 4v14h-6V36H16v9z" fill="#9fd6ee" stroke="#5aa7cc" />
        <path d="M17 37h17v5H17z" fill="#d9b64d" />
      </svg>
    </button>
    <span className="h-[54px] w-1 shrink-0 border-r border-[#1c4468] bg-white/30" />
    <button type="button" aria-label="팟플레이어" className="ml-[17px] shrink-0">
      <svg width="46" height="46" viewBox="0 0 46 46">
        <circle cx="23" cy="23" r="23" fill="#f8d818" />
        <path d="M17 13l17 10-17 10z" fill="#fff" />
      </svg>
    </button>
    <button type="button" aria-label="미디어 플레이어" className="ml-[32px] shrink-0">
      <svg width="44" height="42" viewBox="0 0 44 42">
        <path d="M32 5l6 1v30l-6 3zM28 4l6 1v32l-6 3z" fill="#b9dcee" stroke="#5f9dbf" />
        <path d="M2 3h28v38L2 37z" fill="#8fc3e0" stroke="#d8eef8" />
        <ellipse cx="16" cy="21" rx="12" ry="14" fill="#f47a20" stroke="#fff" />
        <path d="M11 12l13 9-13 9z" fill="#fff" />
      </svg>
    </button>
    <button type="button" aria-label="크롬" className="ml-[34px] shrink-0">
      <svg width="44" height="44" viewBox="0 0 44 44">
        <circle cx="22" cy="22" r="22" fill="#fc3" />
        <path d="M22 22L3 11a22 22 0 0 1 38 0z" fill="#de4437" />
        <path d="M3 11a22 22 0 0 0 18 33l10-17-9-5-9 5z" fill="#1fa15d" />
        <path d="M22 12h19a22 22 0 0 1-19 32l9-17z" fill="#fecd41" />
        <circle cx="22" cy="22" r="10" fill="#fff" />
        <circle cx="22" cy="22" r="8" fill="#4a88f4" />
      </svg>
    </button>
    <button type="button" aria-label="인터넷 익스플로러" className="ml-[32px] shrink-0">
      <svg width="48" height="48" viewBox="0 0 48 48" fill="none">
        <path d="M40 32A16 16 0 1 1 42 25H12" stroke="#e6f8ff" strokeWidth="10" />
        <path d="M40 32A16 16 0 1 1 42 25H12" stroke="#49bdf0" strokeWidth="8" />
        <path d="M10 45C-4 45 6 21 20 10 33 0 46 0 44 11" stroke="#f8c918" strokeWidth="4" />
      </svg>
    </button>
    <button type="button" aria-label="웨일" className={`ml-[17px] w-[75px] shrink-0 bg-white/40 ${taskButton}`}>
      <svg width="46" height="48" viewBox="0 0 46 48">
        <path d="M1 24C1 8 12 0 24 0s21 10 21 24-9 23-22 23c-8 1-14 1-21 0 2-3 4-5 6-5C3 37 1 31 1 24z" fill="#12c4a4" />
        <path d="M5 18C10 5 20 0 29 1c11 2 13 10 14 14-9-3-14 2-19 5-7 4-15 4-19-2z" fill="#1d2a7d" />
        <path d="M43 15c6 15-1 29-16 32-5-2-5-6-2-12 4-9 8-17 18-20z" fill="#f4fbfb" />
        <circle cx="23" cy="24" r="1.500" fill="#14325c" />
        <path d="M17 8h1v1h-1zM26 6h1v1h-1zM32 10h1v1h-1zM14 14h1v1h-1z" fill="#9fd" />
      </svg>
    </button>
    <button type="button" aria-label="파워포인트" className={`ml-[3px] w-[75px] shrink-0 bg-white/70 ${taskButton}`}>
      <svg width="44" height="44" viewBox="0 0 44 44">
        <path d="M22 7h20v31H22z" fill="#fff" stroke="#d24726" strokeWidth="3" />
        <circle cx="31" cy="17" r="6" fill="#d24726" />
        <path d="M32 9v7h7" fill="none" stroke="#fff" strokeWidth="2" />
        <path d="M26 27h11M26 32h11" stroke="#d24726" strokeWidth="2" />
        <path d="M1 6l25-4v40L1 38z" fill="#d24726" />
        <text x="7" y="30" fontSize="23" fontWeight="700" fill="#fff">P</text>
      </svg>
    </button>
    <button type="button" aria-label="그림판" className={`ml-[3px] w-[71px] shrink-0 bg-white/40 ${taskButton}`}>
      <svg width="46" height="46" viewBox="0 0 46 46">
        <path d="M2 30C0 18 12 8 26 9c14 2 20 14 14 24-2 4-8 2-12 1-5-1-4 3-6 6-5 4-18 0-20-10z" fill="#d7e7f3" stroke="#7ea6c4" />
        <circle cx="8" cy="25" r="4" fill="#e8433a" />
        <circle cx="16" cy="16" r="4" fill="#4bb04f" />
        <circle cx="26" cy="13" r="4" fill="#f7b52c" />
        <circle cx="20" cy="27" r="3" fill="#3c8fc4" />
        <path d="M23 44l14-30 4 2-14 29z" fill="#e58a3a" />
        <path d="M36 13l2-12 8 3-5 12z" fill="#c69a5d" />
      </svg>
    </button>
    <span className="h-[54px] w-1 shrink-0 border-r border-[#1c4468] bg-white/30" />

    <div className="relative ml-auto flex h-full items-center">
      <svg width="26" height="24" viewBox="0 0 26 24" fill="none" aria-hidden="true">
        <path d="M4 7c5-6 9 1 17-6" stroke="#aaa" strokeWidth="1.5" />
        <path d="M1 9h23v12H1z" fill="#ddd" stroke="#888" />
        <path d="M4 12h18M4 15h18M6 18h13" stroke="#666" strokeDasharray="2 1" strokeWidth="1.5" />
      </svg>
      <span className="ml-[6px] flex h-[23px] w-[23px] items-center justify-center rounded-full border-2 border-[#aab] bg-[#1418c8] text-[17px] leading-none font-bold">?</span>
      <svg width="12" height="24" viewBox="0 0 12 24" className="ml-[8px]" aria-hidden="true">
        <path d="M1 5h5v4H1zM4 5V2h5v4H6" fill="none" stroke="#fff" strokeWidth="1.300" />
        <path d="M2 18h6l-3 4z" fill="#fff" />
      </svg>
      <svg width="12" height="8" viewBox="0 0 12 8" className="ml-[115px]" aria-hidden="true"><path d="M0 8h12L6 0z" fill="#fff" /></svg>
      <svg width="24" height="24" viewBox="0 0 24 24" className="ml-[25px]" aria-hidden="true">
        <path d="M3 1v22" stroke="#fff" strokeWidth="2" />
        <path d="M4 3c5-3 7 3 11 3 3 0 4 0 7-1-2 4-2 6-4 10-5 2-8-3-14-1z" fill="#fff" />
      </svg>
      <svg width="26" height="24" viewBox="0 0 26 24" fill="none" stroke="#fff" className="ml-[10px]" aria-hidden="true">
        <path d="M6 5h18v13H6z" fill="#2a5077" strokeWidth="2" />
        <path d="M8 22h14M15 18v4" strokeWidth="3" />
        <path d="M1 1h5v7H1zM3 8v10" strokeWidth="1.5" />
      </svg>
      <svg width="26" height="24" viewBox="0 0 26 24" fill="none" stroke="#fff" className="ml-[10px]" aria-hidden="true">
        <path d="M1 7h4v10H1zM5 7l7-6v22l-7-6z" fill="#fff" strokeWidth="1" />
        <path d="M15 8c2 3 2 5 0 8M18 6c3 4 3 8 0 12M21 4c4 5 4 11 0 16" strokeWidth="1.300" />
      </svg>
      <time className="ml-[7px] flex w-[125px] flex-col items-center text-[18px] leading-[26px]">
        <span>오후 2:29</span>
        <span>2020-07-07</span>
      </time>
      <button type="button" aria-label="바탕 화면 보기" className="h-full w-[15px] border border-[#6a8bab] bg-[#1f4d7c]" />
    </div>
  </div>
);

export default function App() {
  return (
    <div className="relative flex min-h-screen flex-col overflow-hidden bg-[#e6e6e6] font-['Noto_Sans','Noto_Sans_CJK_KR',sans-serif] text-[19px] leading-[24px] font-light text-[#444]">
      <TitleBar />
      <Ribbon />
      <QuickAccess />
      <Editor />
      <StatusBar />
      <Taskbar />
      <ContextMenu />
      <MiniToolbar />
    </div>
  );
}
